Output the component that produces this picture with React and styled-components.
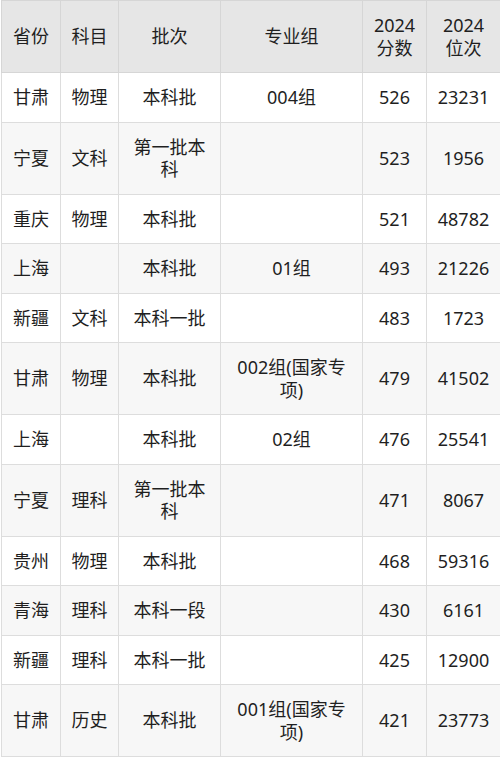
import React from 'react'
import styled, { createGlobalStyle } from 'styled-components'

const GlobalStyle = createGlobalStyle`
    body {
        margin: 0;
        background: #ffffff;
        font-family: "Noto Sans", "Noto Sans CJK SC", sans-serif;
    }
`;

const Table = styled.table`
    width: 499px;
    margin-left: 1px;
    border-collapse: collapse;
    table-layout: fixed;
    font-size: 18px;
    line-height: 22.5px;
    color: #1f1f1f;
`;

const Head = styled.th`
    background: #e6e6e6;
    border: 1px solid #d6d6d6;
    font-weight: 400;
    padding: 13px 8px;
    text-align: center;
`;

const Row = styled.tr`
    background: ${p => (p.$shade ? '#f7f7f7' : '#ffffff')};
`;

const Cell = styled.td`
    border: 1px solid #dddddd;
    padding: 13px 10px;
    text-align: center;
    vertical-align: middle;
    word-break: break-all;
`;

const widths = [59, 58, 102, 142, 64, 74];

const headers = ['省份', '科目', '批次', '专业组', '2024分数', '2024位次'];

const rows = [
    ['甘肃', '物理', '本科批', '004组', '526', '23231'],
    ['宁夏', '文科', '第一批本科', '', '523', '1956'],
    ['重庆', '物理', '本科批', '', '521', '48782'],
    ['上海', '', '本科批', '01组', '493', '21226'],
    ['新疆', '文科', '本科一批', '', '483', '1723'],
    ['甘肃', '物理', '本科批', '002组(国家专项)', '479', '41502'],
    ['上海', '', '本科批', '02组', '476', '25541'],
    ['宁夏', '理科', '第一批本科', '', '471', '8067'],
    ['贵州', '物理', '本科批', '', '468', '59316'],
    ['青海', '理科', '本科一段', '', '430', '6161'],
    ['新疆', '理科', '本科一批', '', '425', '12900'],
    ['甘肃', '历史', '本科批', '001组(国家专项)', '421', '23773'],
];

const App = () => {
    return (
        <>
            <GlobalStyle />
            <Table>
                <colgroup>
                    {widths.map((w, i) => (
                        <col key={i} style={{ width: w }} />
                    ))}
                </colgroup>
                <thead>
                    <tr>
                        {headers.map((h, i) => (
                            <Head key={i}>
                                {h.startsWith('2024') ? (
                                    <>
                                        2024
                                        <br />
                                        {h.slice(4)}
                                    </>
                                ) : (
                                    h
                                )}
                            </Head>
                        ))}
                    </tr>
                </thead>
                <tbody>
                    {rows.map((r, i) => (
                        <Row key={i} $shade={i % 2 === 1}>
                            {r.map((c, j) => (
                                <Cell key={j}>{c}</Cell>
                            ))}
                        </Row>
                    ))}
                </tbody>
            </Table>
        </>
    )
}

export default App
